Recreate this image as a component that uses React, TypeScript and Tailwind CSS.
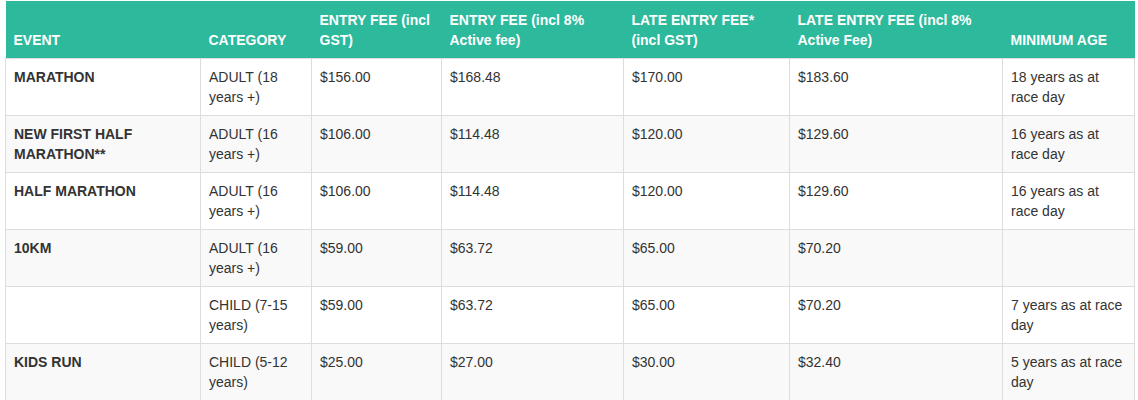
import React from 'react';

type Row = {
  event: string;
  category: string;
  fee: string;
  feeActive: string;
  late: string;
  lateActive: string;
  age: string;
};

const rows: Row[] = [
  { event: 'MARATHON', category: 'ADULT (18 years +)', fee: '$156.00', feeActive: '$168.48', late: '$170.00', lateActive: '$183.60', age: '18 years as at race day' },
  { event: 'NEW FIRST HALF MARATHON**', category: 'ADULT (16 years +)', fee: '$106.00', feeActive: '$114.48', late: '$120.00', lateActive: '$129.60', age: '16 years as at race day' },
  { event: 'HALF MARATHON', category: 'ADULT (16 years +)', fee: '$106.00', feeActive: '$114.48', late: '$120.00', lateActive: '$129.60', age: '16 years as at race day' },
  { event: '10KM', category: 'ADULT (16 years +)', fee: '$59.00', feeActive: '$63.72', late: '$65.00', lateActive: '$70.20', age: '' },
  { event: '', category: 'CHILD (7-15 years)', fee: '$59.00', feeActive: '$63.72', late: '$65.00', lateActive: '$70.20', age: '7 years as at race day' },
  { event: 'KIDS RUN', category: 'CHILD (5-12 years)', fee: '$25.00', feeActive: '$27.00', late: '$30.00', lateActive: '$32.40', age: '5 years as at race day' },
];

const headers = [
  'EVENT',
  'CATEGORY',
  'ENTRY FEE (incl GST)',
  'ENTRY FEE (incl 8% Active fee)',
  'LATE ENTRY FEE* (incl GST)',
  'LATE ENTRY FEE (incl 8% Active Fee)',
  'MINIMUM AGE',
];

const App: React.FC = () => {
  return (
    <div className="bg-white pl-[5px] pt-px" style={{ fontFamily: '"Liberation Sans", Arial, sans-serif' }}>
      <table className="w-[1129px] table-fixed border-collapse text-[14px] leading-5 text-[#333]">
        <colgroup>
          <col className="w-[195px]" />
          <col className="w-[111px]" />
          <col className="w-[130px]" />
          <col className="w-[182px]" />
          <col className="w-[166px]" />
          <col className="w-[213px]" />
          <col className="w-[132px]" />
        </colgroup>
        <thead>
          <tr className="bg-[#2cb99c]">
            {headers.map((h) => (
              <th key={h} className="h-[57px] px-2 pb-2 pt-2 text-left align-bottom font-bold text-white">
                {h}
              </th>
            ))}
          </tr>
        </thead>
        <tbody>
          {rows.map((r, i) => (
            <tr key={i} className={i % 2 === 1 ? 'bg-[#f9f9f9]' : 'bg-white'}>
              <td className="border border-[#ddd] p-2 align-top font-bold">{r.event}</td>
              <td className="border border-[#ddd] p-2 align-top">{r.category}</td>
              <td className="border border-[#ddd] p-2 align-top">{r.fee}</td>
              <td className="border border-[#ddd] p-2 align-top">{r.feeActive}</td>
              <td className="border border-[#ddd] p-2 align-top">{r.late}</td>
              <td className="border border-[#ddd] p-2 align-top">{r.lateActive}</td>
              <td className="border border-[#ddd] p-2 align-top">{r.age}</td>
            </tr>
          ))}
        </tbody>
      </table>
    </div>
  );
};

export default App;
